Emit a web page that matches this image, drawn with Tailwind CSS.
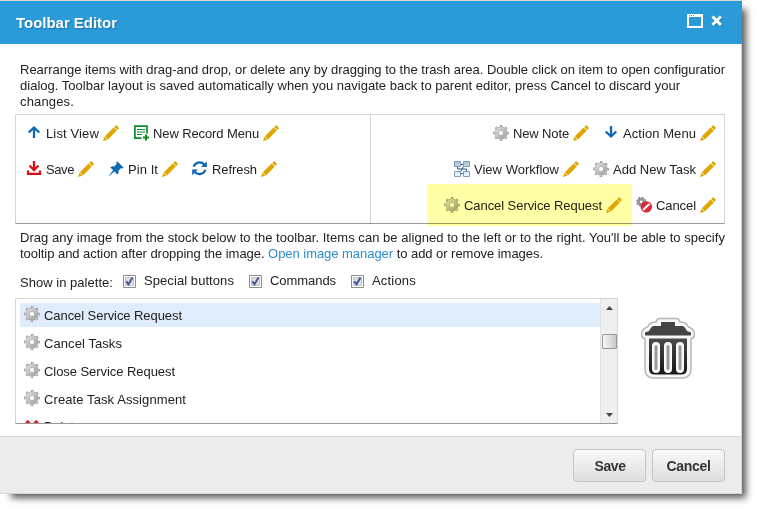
<!DOCTYPE html>
<html lang="en">
<head>
<meta charset="utf-8">
<title>Toolbar Editor</title>
<script src="https://cdn.jsdelivr.net/npm/@tailwindcss/browser@4"></script>
</head>
<body class="bg-white overflow-hidden h-[509px] w-[757px] text-[13px] leading-4 text-[#222] font-['Liberation_Sans',Arial,sans-serif]">
<svg class="absolute w-0 h-0">
  <defs>
    <linearGradient id="metal" gradientUnits="userSpaceOnUse" x1="3" y1="3" x2="13" y2="13"><stop offset="0" stop-color="#dedede"/><stop offset="1" stop-color="#a2a2a2"/></linearGradient>
    <linearGradient id="bin" x1="0" y1="0" x2="0" y2="1"><stop offset="0" stop-color="#4a4a4a"/><stop offset="1" stop-color="#161616"/></linearGradient>
    <linearGradient id="flow" x1="0" y1="0" x2="0" y2="1"><stop offset="0" stop-color="#a9c3da"/><stop offset="1" stop-color="#f2f6fb"/></linearGradient>
  </defs>
  <symbol id="pencil" viewBox="0 0 16 16"><path fill="#dfa600" d="M11.200 2 12.600.600Q13.200.100 13.800.600L15.600 2.400Q16 2.900 15.600 3.500L14.200 5ZM10.700 2.400 13.800 5.500 5 14.400 1.800 11.200ZM1.400 11.800 4.400 14.800.1 16Z"/></symbol>
  <symbol id="up" viewBox="0 0 16 16"><path fill="none" stroke="#0c68b4" stroke-width="2.300" d="M8 13V2.500M2.700 7.500 8 2.500 13.300 7.500"/></symbol>
  <symbol id="down" viewBox="0 0 16 16"><path fill="none" stroke="#0c68b4" stroke-width="2.300" d="M8 1V11.500M2.700 6.500 8 11.500 13.300 6.500"/></symbol>
  <symbol id="record" viewBox="0 0 16 16"><path fill="none" stroke="#078e28" stroke-width="1.700" d="M8.500 13.200H1.900V1.200H14V8.500"/><path fill="none" stroke="#078e28" stroke-width="1.200" d="M4 4.500H12M4 7H12M4 9.500H9"/><path stroke="#078e28" stroke-width="2" d="M13 9.500V15.500M10 12.500H16"/></symbol>
  <symbol id="save" viewBox="0 0 16 16"><path fill="none" stroke="#d90d12" stroke-width="2.300" d="M8 0V9M3.500 4.500 8 9 12.500 4.500M2 9.500V12.800H14V9.500"/></symbol>
  <symbol id="pin" viewBox="0 0 16 16"><path fill="#0c68b4" d="M9.300.4 15.500 6.500 14.200 7.500 12.800 7.200 10.500 9.600Q11 12 9.500 13.500L6.400 10.500 1 15 .7 14.700 5.200 9.300 2.300 6.400Q4 5 6.300 5.400L8.600 3.100 8.200 1.600Z"/></symbol>
  <symbol id="refresh" viewBox="0 0 16 16"><path fill="none" stroke="#0c68b4" stroke-width="2.200" d="M1.700 5.800A6 5.500 0 0 1 12.200 3.500M13.300 8.800A6 5.500 0 0 1 2.800 11"/><path fill="#0c68b4" d="M14.800.3V6H9.100ZM.2 14.300V8.600H5.900Z"/></symbol>
  <symbol id="gear" viewBox="0 0 16 16"><circle cx="8" cy="8" r="6.700" fill="none" stroke="#979797" stroke-width="2.400" stroke-dasharray="2.500 2.762" stroke-dashoffset="1.250"/><circle cx="8" cy="8" r="4.200" fill="none" stroke="#9a9a9a" stroke-width="4.400"/><circle cx="8" cy="8" r="6.300" fill="none" stroke="#cacaca" stroke-width="2" stroke-dasharray="1.500 3.448" stroke-dashoffset=".750"/><circle cx="8" cy="8" r="4.200" fill="none" stroke="url(#metal)" stroke-width="3.400"/><circle cx="8" cy="8" r="2" fill="#fff"/></symbol>
  <symbol id="flowchart" viewBox="0 0 16 16"><path fill="none" stroke="#2f5477" d="M6 3.500H10M6 12.500H10M10 4.500 6 11.500M3.500 6V8H12.500V10"/><g fill="url(#flow)" stroke="#7f9dba"><path d="M.5.5H6.500V5.500H.5ZM9.500.5H15.500V5.500H9.500ZM.5 10.500H6.500V15.500H.5ZM9.500 10.500H15.500V15.500H9.500Z"/></g></symbol>
  <symbol id="cancelgear" viewBox="0 0 16 16"><circle cx="5.200" cy="4.800" r="4" fill="none" stroke="#777" stroke-width="2" stroke-dasharray="1.700 1.440"/><circle cx="5.200" cy="4.800" r="2.700" fill="none" stroke="#949494" stroke-width="2.600"/><circle cx="10.300" cy="9.900" r="5.700" fill="#d72b35"/><path stroke="#fff" stroke-width="2.200" d="M7 13 13.600 6.800"/></symbol>
  <symbol id="check" viewBox="0 0 13 13"><path fill="#fff" stroke="#8c8c8c" d="M.5.5H12.500V12.500H.5Z"/><path fill="#dcdfe5" stroke="#c0c4ca" d="M2.500 2.500H10.500V10.500H2.500Z"/><path fill="none" stroke="#40549a" stroke-width="2" d="M3.300 6.300 5.500 9.300 9.500 2.600"/></symbol>
</svg>

<div class="relative w-[742px] h-[494px]">
  <!-- soft drop shadow, offset to the lower right -->
  <div class="absolute left-[15px] top-[13px] w-[727px] h-[481px] shadow-[0_0_7px_4px_rgba(0,0,0,0.65)]"></div>
  <main class="relative w-[742px] h-[494px] flex flex-col bg-white border-t border-r border-b border-[#d5d5d5]">
    <header class="h-[43px] shrink-0 -mr-px bg-[#2a9ad9] text-white flex items-center justify-between pl-4 pr-[19px]">
      <h1 class="text-[15px] font-bold text-shadow-[1px_1px_1px_#176492aa] pt-px whitespace-nowrap"><span data-w="101">Toolbar Editor</span></h1>
      <div class="flex gap-[8px] items-center -mt-[3px]">
        <svg class="w-4 h-[14px]" viewBox="0 0 16 14"><path fill="none" stroke="#fff" stroke-width="2" d="M1 1H15V13H1Z"/><path fill="#fff" d="M1 1H15V3H1Z"/><path stroke="#2a9ad9" stroke-dasharray="1 1" d="M2 1.500H7"/></svg>
        <svg class="w-[12px] h-[12px]" viewBox="0 0 12 12"><path stroke="#176492" stroke-width="2.600" d="M2.500 2.500 10.500 10.500M10.500 2.500 2.500 10.500"/><path stroke="#fff" stroke-width="3" d="M1.500 1.500 10 10M10 1.500 1.500 10"/></svg>
      </div>
    </header>

    <section class="h-[392px] shrink-0 pl-[15px] pr-4 pt-[18px] overflow-hidden">
      <p class="h-12 ml-[5px] w-[705px] overflow-hidden whitespace-nowrap"><span data-w="708">Rearrange items with drag-and drop, or delete any by dragging to the trash area. Double click on item to open configuration</span><br><span data-w="660">dialog. Toolbar layout is saved automatically when you navigate back to parent editor, press Cancel to discard your</span><br><span data-w="54">changes.</span></p>

      <div class="mt-[4px] relative w-[710px] h-[110px] flex border border-[#d5d5d5] border-b-[#999] leading-[18px]">
        <div class="w-[355px] border-r border-[#d5d5d5] pl-[10px] flex flex-col" id="left"></div>
        <div class="flex-1 pr-[8px] flex flex-col items-end" id="right"></div>
        <div class="absolute left-[411px] top-[69px] w-[205px] h-[42px] bg-[#ffffa6] mix-blend-multiply"></div>
      </div>

      <p class="mt-[6px] ml-[5px] whitespace-nowrap"><span data-w="705">Drag any image from the stock below to the toolbar. Items can be aligned to the left or to the right. You'll be able to specify</span><br><span data-w="523">tooltip and action after dropping the image. <a class="text-[#2b8ecb]">Open image manager</a> to add or remove images.</span></p>

      <div class="ml-[5px] mt-[10px] h-[18px] flex whitespace-nowrap">
        <span class="w-[103px] pt-[3px]"><span data-w="93">Show in palette:</span></span>
        <label class="flex w-[126px] gap-2"><svg class="w-[13px] h-[13px] mt-[3px]"><use href="#check"/></svg><span class="pt-px"><span data-w="90">Special buttons</span></span></label>
        <label class="flex w-[102px] gap-2"><svg class="w-[13px] h-[13px] mt-[3px]"><use href="#check"/></svg><span class="pt-px"><span data-w="66">Commands</span></span></label>
        <label class="flex gap-2"><svg class="w-[13px] h-[13px] mt-[3px]"><use href="#check"/></svg><span class="pt-px"><span data-w="44">Actions</span></span></label>
      </div>

      <div class="mt-[8px] flex">
        <div class="w-[603px] h-[126px] border border-[#d5d5d5] border-b-[#999] flex overflow-hidden">
          <div class="flex-1 pl-1 pt-1 flex flex-col gap-1 whitespace-nowrap" id="list"></div>
          <div class="w-[17px] bg-[#efefef] border-l border-[#e2e2e2] flex flex-col items-center">
            <svg class="w-[7px] h-[4px] mt-[7px]" viewBox="0 0 7 4"><path fill="#444" d="M0 4 3.500 0 7 4Z"/></svg>
            <div class="w-[15px] h-[15px] mt-[24px] border border-[#999] rounded-[1px] bg-linear-to-r from-[#f8f8f8] to-[#c8c8c8]"></div>
            <svg class="w-[7px] h-[4px] mt-[64px]" viewBox="0 0 7 4"><path fill="#444" d="M0 0 3.500 4 7 0Z"/></svg>
          </div>
        </div>
        <svg class="ml-[22px] mt-[19px] w-[56px] h-[62px]" viewBox="0 0 56 62">
          <path fill="#f8f8f8" stroke="#b5b5b5" stroke-width="1.500" stroke-linejoin="round" d="M20 1.500H36Q39 1.500 40 5Q46 5 48.500 10Q54.500 12 54.500 17Q54.500 21 51 21.500V52Q51 61 42 61H14Q5 61 5 52V21.500Q1.500 21 1.500 17Q1.500 12 7.500 10Q10 5 16 5Q17 1.500 20 1.500Z"/>
          <path fill="#454545" d="M21 5H35V9H43Q46 11 47 14L51 15.500V18.500H5V15.500L9 14Q10 11 13 9H21Z"/>
          <path fill="url(#bin)" d="M9 21.500H47V52Q47 57.500 41 57.500H15Q9 57.500 9 52Z"/>
          <g fill="#fafafa"><rect x="12" y="25" width="8" height="31" rx="4"/><rect x="24" y="25" width="8" height="31" rx="4"/><rect x="36" y="25" width="8" height="31" rx="4"/></g>
          <g fill="#999"><rect x="14.500" y="28" width="3" height="25" rx="1.500"/><rect x="26.500" y="28" width="3" height="25" rx="1.500"/><rect x="38.500" y="28" width="3" height="25" rx="1.500"/></g>
        </svg>
      </div>
    </section>

    <footer class="flex-1 bg-[#ececec] border-t border-[#d5d5d5] flex justify-end gap-[6px] pr-4 pt-[12px] text-[14px] font-bold text-[#333]">
      <button class="w-[73px] h-[33px] border border-[#c5c5c5] rounded-[4px] bg-linear-to-b from-[#f9f9f9] to-[#dedede] pt-px pl-px"><span data-w="31">Save</span></button>
      <button class="w-[73px] h-[33px] border border-[#c5c5c5] rounded-[4px] bg-linear-to-b from-[#f9f9f9] to-[#dedede] pt-px"><span data-w="44">Cancel</span></button>
    </footer>
  </main>
</div>

<script>
const icon = n => `<svg class="w-4 h-4 shrink-0"><use href="#${n}"/></svg>`;
const item = ([i, t, w]) => `<div class="flex items-center gap-1 whitespace-nowrap">${icon(i)}<span class="pt-[2px]" style="width:${w}px"><span data-w="${w}">${t}</span></span>${icon('pencil')}</div>`;
const rows = r => r.map(x => `<div class="h-9 flex items-center gap-[14px]">${x.map(item).join('')}</div>`).join('');
document.getElementById('left').innerHTML = rows([
  [['up', 'List View', 53], ['record', 'New Record Menu', 106]],
  [['save', 'Save', 28], ['pin', 'Pin It', 30], ['refresh', 'Refresh', 45]]]);
document.getElementById('right').innerHTML = rows([
  [['gear', 'New Note', 56], ['down', 'Action Menu', 73]],
  [['flowchart', 'View Workflow', 85], ['gear', 'Add New Task', 83]],
  [['gear', 'Cancel Service Request', 138], ['cancelgear', 'Cancel', 40]]]);
document.getElementById('list').innerHTML = [['Cancel Service Request', 138], ['Cancel Tasks', 78], ['Close Service Request', 131], ['Create Task Assignment', 142]]
  .map(([t, w], n) => `<div class="h-6 shrink-0 flex items-center gap-1 pl-1 ${n ? '' : 'bg-[#deecfb]'}"><span class="-mt-[2px]">${icon('gear')}</span><span class="pt-px"><span data-w="${w}">${t}</span></span></div>`).join('')
  + `<div class="h-6 shrink-0 flex items-center gap-1 pl-1"><svg class="w-4 h-4 shrink-0" viewBox="0 0 16 16"><path stroke="#e3221b" stroke-width="3.500" d="M2.500 2 13.500 13M13.500 2 2.500 13"/></svg><span class="-mt-px"><span data-w="37">Delete</span></span></div>`;
// Track each label to its set width, again whenever the page's styles change its size
const fit = () => {
  const labels = [...document.querySelectorAll('[data-w]')];
  labels.forEach(e => e.style.letterSpacing = '0px');
  const widths = labels.map(e => e.getBoundingClientRect().width);
  labels.forEach((e, n) => e.style.letterSpacing = ((e.dataset.w - widths[n]) / e.textContent.length) + 'px');
};
fit();
addEventListener('load', fit);
new ResizeObserver(fit).observe(document.body);
</script>
</body>
</html>
